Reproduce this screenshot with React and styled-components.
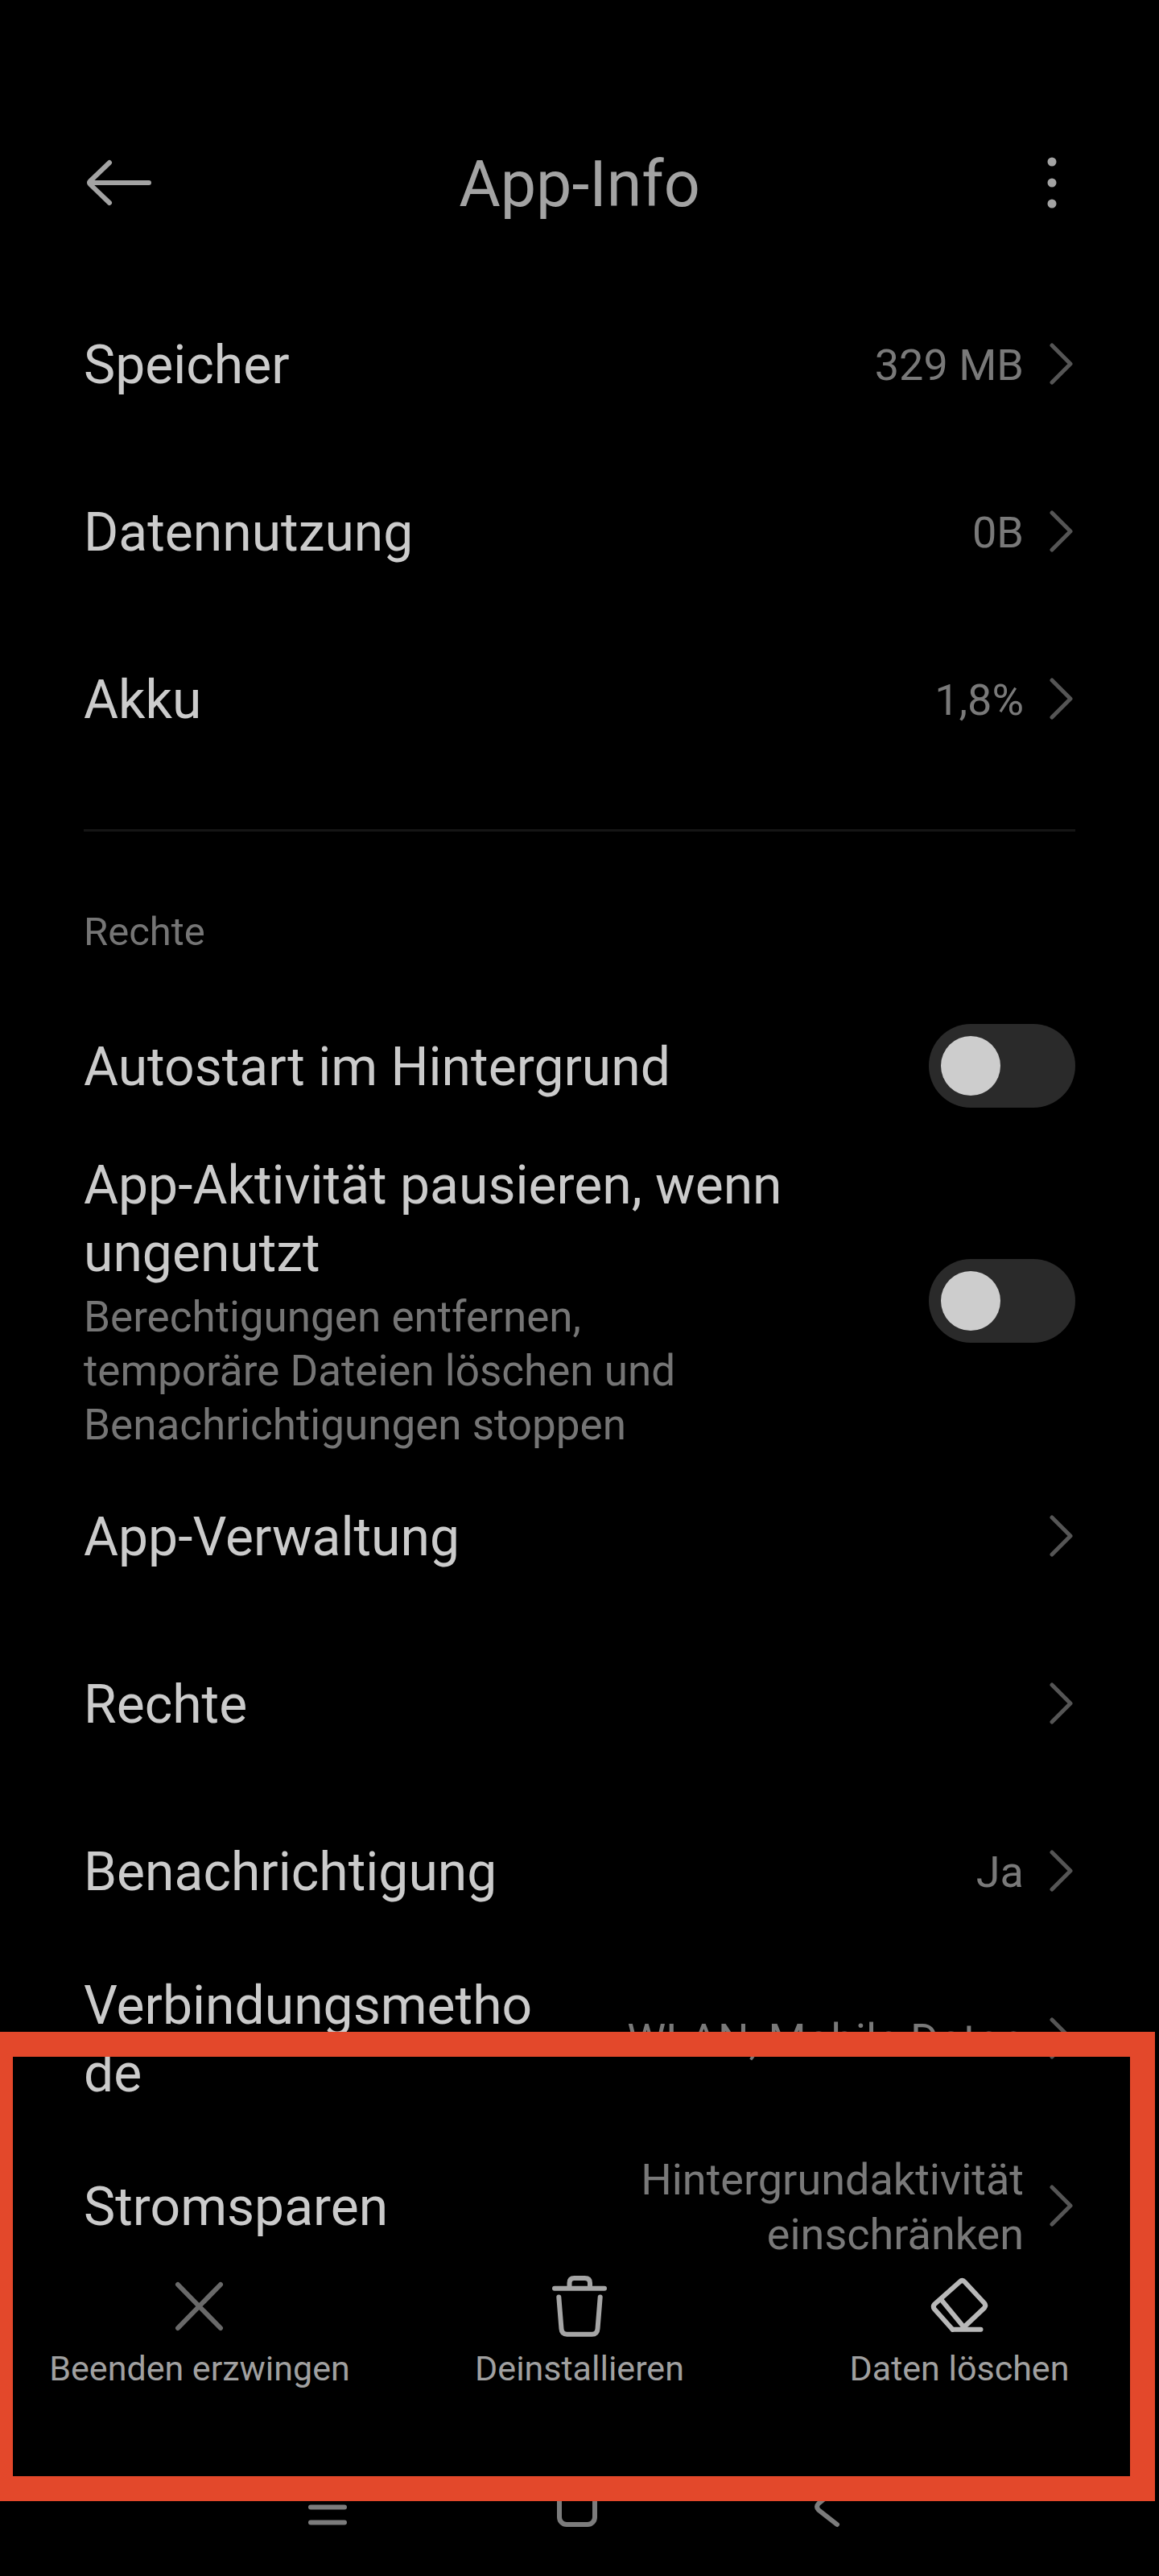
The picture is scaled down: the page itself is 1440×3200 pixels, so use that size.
import React from "react";
import styled, { createGlobalStyle } from "styled-components";

const GlobalStyle = createGlobalStyle`
  * {
    box-sizing: border-box;
  }
  body {
    margin: 0;
    background: #000;
    color: #cbcbcb;
    font-family: Roboto, "Liberation Sans", sans-serif;
  }
  button {
    padding: 0;
    border: 0;
    background: none;
    color: inherit;
    font: inherit;
    text-align: left;
    cursor: pointer;
  }
`;

const Page = styled.div`
  min-height: 100vh;
  padding-bottom: 356px;
`;

const Header = styled.header`
  display: grid;
  grid-template-columns: 1fr auto 1fr;
  align-items: center;
  height: 348px;
  padding: 106px 104px 0;
  color: #a3a3a3;
`;

const IconButton = styled.button`
  display: flex;
  justify-self: ${(props) => props.$side};
`;

const Title = styled.h1`
  margin: 0;
  padding-top: 4px;
  font-size: 79px;
  font-weight: 400;
  line-height: 96px;
`;

const Icon = styled.svg`
  display: block;
  flex: none;
  fill: none;
  stroke: ${(props) => props.$color || "currentColor"};
  stroke-width: 6;
  stroke-linecap: round;
  stroke-linejoin: round;
`;

const Row = styled.button`
  display: flex;
  align-items: center;
  gap: 32px;
  width: 100%;
  min-height: 208px;
  padding: 0 104px;
`;

const RowLabel = styled.span`
  flex: 0 1 580px;
  margin-right: auto;
  padding-top: 4px;
  font-size: 66px;
  line-height: 84px;
  overflow-wrap: anywhere;
`;

const RowValue = styled.span`
  max-width: 520px;
  padding-top: 4px;
  color: #797979;
  font-size: 54px;
  line-height: 68px;
  text-align: right;
`;

const Divider = styled.hr`
  height: 3px;
  margin: 58px 104px 0;
  border: 0;
  background: #151515;
`;

const SectionTitle = styled.h2`
  margin: 0;
  padding: 93px 104px 30px;
  color: #757575;
  font-size: 49px;
  font-weight: 400;
  line-height: 64px;
`;

const SwitchRow = styled.label`
  display: flex;
  align-items: center;
  justify-content: space-between;
  gap: 32px;
  min-height: ${(props) => (props.$tall ? 376 : 208)}px;
  padding: 0 104px;
`;

const SwitchText = styled.span`
  display: flex;
  flex-direction: column;
  gap: 4px;
  max-width: 960px;
  padding-top: 3px;
  font-size: 66px;
  line-height: 84px;
`;

const Description = styled.small`
  max-width: 840px;
  color: #757575;
  font-size: 53px;
  line-height: 67px;
`;

const Switch = styled.input`
  appearance: none;
  flex: none;
  display: flex;
  width: 182px;
  height: 104px;
  margin: 0;
  padding: 15px;
  border-radius: 52px;
  background: #2a2a2a;

  &::before {
    content: "";
    width: 74px;
    height: 74px;
    border-radius: 50%;
    background: #cdcdcd;
  }

  &:checked {
    justify-content: flex-end;
    background: #2f6fe0;
  }
`;

const Footer = styled.footer`
  position: fixed;
  left: 0;
  right: 0;
  bottom: 0;
  padding-bottom: 58px;
  background: #000;
`;

const Actions = styled.div`
  display: grid;
  grid-template-columns: repeat(3, 1fr);
  padding: 0 12px;
`;

const Action = styled.button`
  display: flex;
  flex-direction: column;
  align-items: center;
  gap: 12px;
  && {
    color: #a0a0a0;
    font-size: 43px;
    line-height: 50px;
  }
`;

const SystemNav = styled.nav`
  display: grid;
  grid-template-columns: repeat(3, 310px);
  justify-content: center;
  justify-items: center;
  margin-top: 119px;
  padding-right: 6px;
  color: #7c7c7c;
`;

// marks the part of the screen the reader should look at
const Highlight = styled.div`
  position: fixed;
  left: -15px;
  right: 5px;
  bottom: 93px;
  height: 583px;
  border: 31px solid #e3482b;
  pointer-events: none;
`;

const Chevron = () => (
  <Icon width="32" height="56" viewBox="0 0 32 56" $color="#555">
    <path d="M3 5 L26 28 L3 51" strokeWidth="5" />
  </Icon>
);

const LinkRow = ({ label, value }) => (
  <Row type="button">
    <RowLabel>{label}</RowLabel>
    {value && <RowValue>{value}</RowValue>}
    <Chevron />
  </Row>
);

const usage = [
  { label: "Speicher", value: "329 MB" },
  { label: "Datennutzung", value: "0B" },
  { label: "Akku", value: "1,8%" },
];

const rights = [
  { label: "App-Verwaltung" },
  { label: "Rechte" },
  { label: "Benachrichtigung", value: "Ja" },
  { label: "Verbindungsmethode", value: "WLAN, Mobile Daten" },
  { label: "Stromsparen", value: "Hintergrundaktivität einschränken" },
];

const App = () => {
  return (
    <Page>
      <GlobalStyle />
      <Header>
        <IconButton type="button" aria-label="Zurück" $side="start">
          <Icon width="88" height="64" viewBox="0 0 88 64">
            <path d="M81 32 H7 M32 7 L8 30 Q6 32 8 34 L32 57" />
          </Icon>
        </IconButton>
        <Title>App-Info</Title>
        <IconButton type="button" aria-label="Mehr" $side="end">
          <Icon width="58" height="72" viewBox="0 0 58 72">
            <path d="M29 10 V10 M29 36 V36 M29 62 V62" strokeWidth="11" />
          </Icon>
        </IconButton>
      </Header>

      <main>
        {usage.map((item) => (
          <LinkRow key={item.label} {...item} />
        ))}
        <Divider />
        <SectionTitle>Rechte</SectionTitle>
        <SwitchRow>
          <SwitchText>Autostart im Hintergrund</SwitchText>
          <Switch type="checkbox" />
        </SwitchRow>
        <SwitchRow $tall>
          <SwitchText>
            App-Aktivität pausieren, wenn ungenutzt
            <Description>
              Berechtigungen entfernen, temporäre Dateien löschen und
              Benachrichtigungen stoppen
            </Description>
          </SwitchText>
          <Switch type="checkbox" />
        </SwitchRow>
        {rights.map((item) => (
          <LinkRow key={item.label} {...item} />
        ))}
      </main>

      <Footer>
        <Actions>
          <Action type="button">
            <Icon width="80" height="80" viewBox="0 0 80 80" $color="#696969">
              <path d="M13 13 L66 67 M66 13 L13 67" />
            </Icon>
            Beenden erzwingen
          </Action>
          <Action type="button">
            <Icon width="80" height="80" viewBox="0 0 80 80" $color="#a5a5a5">
              <path d="M9 17.7 H71 M27.5 16 V11 Q27.5 5 33.5 5 H46.5 Q53 5 53 11 V16" />
              <path d="M14.3 28.5 L17.5 68 Q18 74.7 24.5 74.7 H55.5 Q62 74.7 62.5 68 L65.7 28.5" />
            </Icon>
            Deinstallieren
          </Action>
          <Action type="button">
            <Icon width="80" height="80" viewBox="0 0 80 80" $color="#b8b8b8">
              <path d="M31.5 68.7 L9 43.5 Q6.5 40.5 9 37.5 L40.5 9.5 Q43.7 6.5 46.7 9.7 L71 36 Q73.5 39 71 42 L45 66.5" />
              <path d="M17.3 31.7 L45.3 65.7 M31.5 68.7 H66.5" />
            </Icon>
            Daten löschen
          </Action>
        </Actions>
        <SystemNav>
          <IconButton type="button" aria-label="Letzte Apps">
            <Icon width="56" height="56" viewBox="0 0 56 56">
              <path d="M7 9.5 H49 M7 28.5 H49 M7 47.5 H49" />
            </Icon>
          </IconButton>
          <IconButton type="button" aria-label="Startseite">
            <Icon width="56" height="56" viewBox="0 0 56 56">
              <rect x="6" y="6" width="44" height="44" rx="9" />
            </Icon>
          </IconButton>
          <IconButton type="button" aria-label="Zurück">
            <Icon width="56" height="56" viewBox="0 0 56 56">
              <path d="M41 5 L18 24 Q14 28 18 32 L41 50" />
            </Icon>
          </IconButton>
        </SystemNav>
      </Footer>
      <Highlight />
    </Page>
  );
};

export default App;
